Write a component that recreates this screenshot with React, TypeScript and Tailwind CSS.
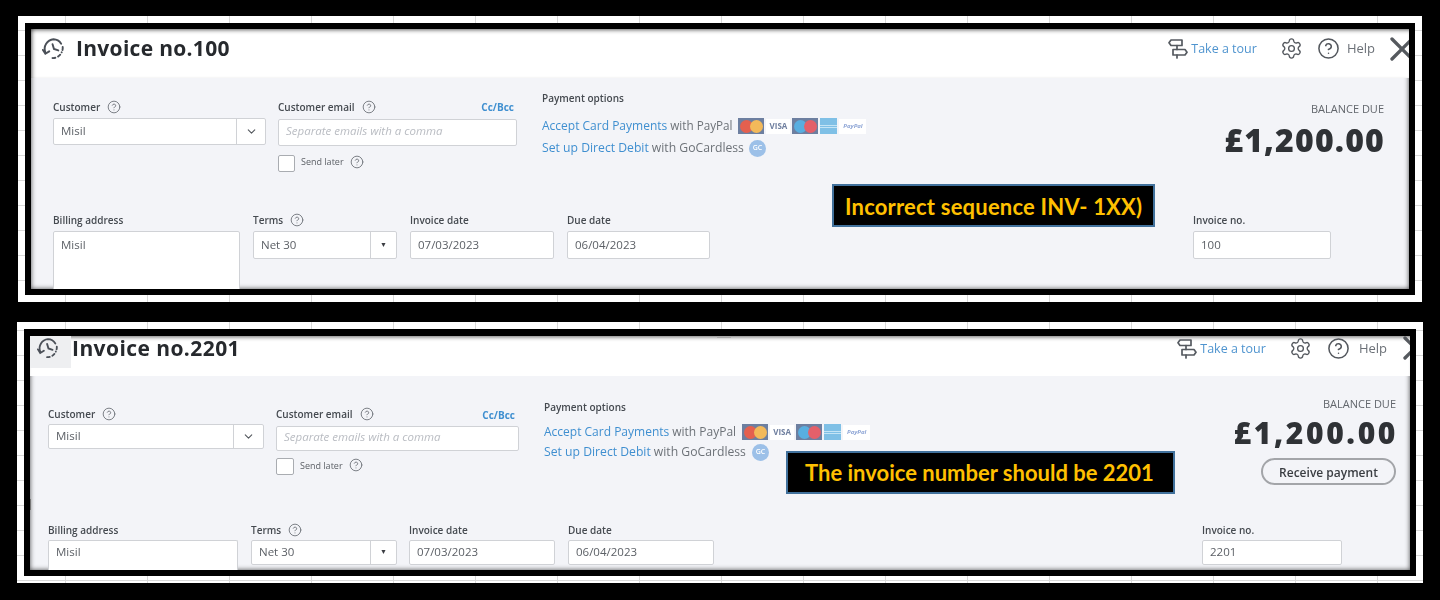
import React from 'react';
import { ChevronDown, CircleHelp, Settings, X } from 'lucide-react';

const sheetGrid =
  'bg-white bg-[linear-gradient(to_right,#d9d9d9_1px,transparent_1px),linear-gradient(to_bottom,#d9d9d9_1px,transparent_1px)] bg-[size:82px_25px]';

const HistoryIcon = ({ size }: { size: number }) => (
  <svg width={size} height={size} viewBox="0 0 24 24" fill="none" stroke="#4b5058" strokeWidth="2" strokeLinecap="round">
    <path d="M3.5 16 A10 10 0 0 1 12 2.4 A10 10 0 0 1 20 7" />
    <path d="M21.6 10.5 A10 10 0 0 1 20.5 16" strokeDasharray="3 2.5" />
    <path d="M19 18.5 A10 10 0 0 1 11 22" strokeDasharray="3 3" />
    <path d="M1 13.5 L3.5 17.5 L7.5 15" />
    <path d="M11 7.5 L12.5 12.5 L17 14" />
  </svg>
);

const TourIcon = () => (
  <svg width="20" height="21" viewBox="0 0 20 21" fill="none" stroke="#555a60" strokeWidth="1.7" strokeLinejoin="round" strokeLinecap="round">
    <path d="M3 2 H14 V7.5 H3 L1 4.75 Z" />
    <path d="M5 11.5 H17 L19 14.2 L17 17 H5 Z" />
    <path d="M9 7.5 V11.5 M9 17 V20" />
  </svg>
);

const CardBadges = () => (
  <div className="flex items-center gap-[2px]">
    <div className="w-[26px] h-[16px] bg-[#6d7fa0] flex items-center justify-center">
      <span className="w-[13px] h-[13px] rounded-full bg-[#e4604f]" />
      <span className="w-[13px] h-[13px] rounded-full bg-[#f3b95a] -ml-[3px]" />
    </div>
    <div className="w-[24px] h-[15px] bg-white flex items-center justify-center text-[8px] font-bold text-[#6f7f9f]">VISA</div>
    <div className="w-[26px] h-[16px] bg-[#6d7fa0] flex items-center justify-center">
      <span className="w-[13px] h-[13px] rounded-full bg-[#58aee0]" />
      <span className="w-[13px] h-[13px] rounded-full bg-[#e4606a] -ml-[3px]" />
    </div>
    <div className="w-[17px] h-[16px] bg-[#7fc0e6] flex flex-col justify-center gap-px">
      <span className="h-px bg-[#c4e4f5]" />
      <span className="h-px bg-[#c4e4f5]" />
    </div>
    <div className="w-[27px] h-[15px] bg-white flex items-center justify-center text-[6px] font-bold italic text-[#8fa6d6]">PayPal</div>
  </div>
);

const Label = ({ text, help, className = '' }: { text: string; help?: boolean; className?: string }) => (
  <div className={`flex items-center gap-[7px] h-[14px] text-[10px] font-semibold text-[#454a50] ${className}`}>
    {text}
    {help && <CircleHelp size={14} strokeWidth={1.5} className="text-[#6b7077]" />}
  </div>
);

const Box = ({ value, className = '', placeholder }: { value?: string; className?: string; placeholder?: string }) => (
  <div className={`flex items-center pl-[7px] bg-white border border-[#d0d2d6] rounded-[2px] text-[11.5px] text-[#5c6066] ${className}`}>
    {placeholder ? <span className="italic text-[#b9bcc2]">{placeholder}</span> : value}
  </div>
);

const Callout = ({ text, className }: { text: string; className: string }) => (
  <div className={`absolute h-[43px] flex items-center bg-black border-2 border-[#41719c] text-[22px] font-bold text-[#ffc000] font-['Lato',sans-serif] ${className}`}>
    {text}
  </div>
);

const TopActions = ({ className, helpGap, textGap }: { className: string; helpGap: string; textGap: string }) => (
  <div className={`flex items-center ${className}`}>
    <TourIcon />
    <span className="ml-[3px] pt-[1px] text-[12.5px] text-[#4f94cf]">Take a tour</span>
    <Settings size={23} strokeWidth={1.4} className="ml-[23px] text-[#53575d]" />
    <CircleHelp size={23} strokeWidth={1.6} className={`${helpGap} text-[#53575d]`} />
    <span className={`${textGap} text-[13px] text-[#6b7077]`}>Help</span>
  </div>
);

const PaymentOptions = ({
  className,
  firstGap,
  secondGap,
  withSize,
  cardGap,
  gcGap,
}: {
  className: string;
  firstGap: string;
  secondGap: string;
  withSize: string;
  cardGap: string;
  gcGap: string;
}) => (
  <div className={className}>
    <div className="h-[12px] leading-[12px] text-[10px] font-semibold text-[#454a50]">Payment options</div>
    <div className={`${firstGap} flex items-center h-[16px] text-[12px] text-[#6d7278]`}>
      <span className="text-[#3f8fd0]">Accept Card Payments</span>
      <span className={`ml-[3px] ${withSize}`}>with PayPal</span>
      <div className={cardGap}><CardBadges /></div>
    </div>
    <div className={`${secondGap} flex items-center h-[17px] text-[12.2px] text-[#6d7278]`}>
      <span className="text-[#3f8fd0]">Set up Direct Debit</span>
      <span className="ml-[3px]">with GoCardless</span>
      <span className={`${gcGap} w-[17px] h-[17px] rounded-full bg-[#9cc0e8] flex items-center justify-center text-[7px] font-semibold text-white`}>GC</span>
    </div>
  </div>
);

const App = () => {
  return (
    <div className="h-[600px] bg-black overflow-hidden font-['Open_Sans',sans-serif]">
      {/* top screenshot */}
      <div className={`mt-[16px] ml-[18px] w-[1404px] h-[286px] p-[7px] bg-[position:47px_14px] ${sheetGrid}`}>
        <div className="h-full bg-black p-[6px]">
          <div className="relative h-full flex flex-col overflow-hidden bg-[#f3f4f8] shadow-[inset_0_0_5px_rgba(0,0,0,0.7)]">
            <div className="h-[49px] shrink-0 pb-[10px] flex items-center bg-white blur-[0.3px] shadow-[inset_0_4px_4px_-3px_rgba(0,0,0,0.6),inset_4px_0_4px_-3px_rgba(0,0,0,0.6)]">
              <div className="ml-[11px]"><HistoryIcon size={23} /></div>
              <h1 className="ml-[11px] text-[21px] font-bold tracking-[0.3px] text-[#26292d]">Invoice no.100</h1>
              <TopActions helpGap="ml-[14px]" textGap="ml-[7px]" className="ml-auto" />
              <X size={40} strokeWidth={2} className="ml-[7px] -mr-[13px] shrink-0 text-[#55595e]" />
            </div>

            <div className="h-[135px] shrink-0 flex pl-[22px] blur-[0.3px]">
              <div className="w-[213px] pt-[22px]">
                <Label text="Customer" help />
                <div className="mt-[4px] h-[27px] flex bg-white border border-[#d0d2d6] rounded-[2px] text-[11.5px] text-[#5c6066]">
                  <div className="flex-1 flex items-center pl-[7px] pb-[1px]">Misil</div>
                  <div className="w-[29px] border-l border-[#d0d2d6] flex items-center justify-center">
                    <ChevronDown size={13} className="text-[#53575d]" />
                  </div>
                </div>
              </div>
              <div className="ml-[12px] w-[239px] pt-[22px]">
                <div className="flex justify-between">
                  <Label text="Customer email" help />
                  <span className="text-[10px] font-bold text-[#3f8fd0] mr-[3px]">Cc/Bcc</span>
                </div>
                <Box placeholder="Separate emails with a comma" className="mt-[4px] h-[27px] pb-[3px]" />
                <div className="mt-[9px] flex items-start text-[9px] leading-[14px] text-[#5c6066]">
                  <div className="w-[17px] h-[17px] bg-white border border-[#a9acb1] rounded-[2px]" />
                  <span className="ml-[6px]">Send later</span>
                  <CircleHelp size={14} strokeWidth={1.5} className="ml-[6px] text-[#6b7077]" />
                </div>
              </div>
              <PaymentOptions firstGap="mt-[14px]" secondGap="mt-[6px]" withSize="text-[11.7px]" cardGap="ml-[6px]" gcGap="ml-[5px]" className="ml-[25px] pt-[14px]" />
              <div className="ml-auto mr-[25px] pt-[23px] flex flex-col items-end">
                <div className="h-[14px] text-[11px] text-[#62666c]">BALANCE DUE</div>
                <div className="mt-[5px] -mr-[1px] text-[32px] leading-[40px] tracking-[1.15px] font-extrabold text-[#2f3236]">£1,200.00</div>
              </div>
            </div>

            <div className="flex pl-[22px] blur-[0.3px]">
              <div className="w-[187px]">
                <Label text="Billing address" />
                <div className="mt-[4px] h-[70px] pt-[4px] pl-[7px] bg-white border border-[#d0d2d6] rounded-[2px] text-[11.5px] text-[#5c6066]">Misil</div>
              </div>
              <div className="ml-[13px] w-[144px]">
                <Label text="Terms" help />
                <div className="mt-[4px] h-[28px] flex bg-white border border-[#d0d2d6] rounded-[2px] text-[11.5px] text-[#5c6066]">
                  <div className="flex-1 flex items-center pl-[7px]">Net 30</div>
                  <div className="w-[26px] border-l border-[#d0d2d6] flex items-center justify-center text-[7px] text-[#3a3d42]">▼</div>
                </div>
              </div>
              <div className="ml-[13px] w-[144px]">
                <Label text="Invoice date" />
                <Box value="07/03/2023" className="mt-[4px] h-[28px]" />
              </div>
              <div className="ml-[13px] w-[143px]">
                <Label text="Due date" />
                <Box value="06/04/2023" className="mt-[4px] h-[28px]" />
              </div>
              <div className="ml-[483px] w-[138px]">
                <Label text="Invoice no." />
                <Box value="100" className="mt-[4px] h-[28px]" />
              </div>
            </div>

            <Callout text="Incorrect sequence INV- 1XX)" className="left-[801px] top-[155px] w-[323px] pl-[11px] pt-[2px] tracking-[0.2px]" />
          </div>
        </div>
      </div>

      {/* bottom screenshot */}
      <div className={`mt-[20px] ml-[17px] w-[1406px] h-[261px] p-[7px] bg-[position:48px_8px] ${sheetGrid}`}>
        <div className="h-full bg-black px-[6px] pt-[7px] pb-[6px]">
          <div className="relative h-full flex flex-col bg-[#f3f4f8] shadow-[inset_0_0_5px_rgba(0,0,0,0.7)]">
            <div className="h-[40px] shrink-0 flex items-start bg-white blur-[0.4px] shadow-[inset_0_4px_4px_-3px_rgba(0,0,0,0.6)]">
              <div className="w-[41px] h-[32px] bg-[#eeeff1] pl-[7px] pt-[1px]"><HistoryIcon size={22} /></div>
              <h1 className="ml-px text-[21px] leading-[25px] font-bold tracking-[0.43px] text-[#26292d]">Invoice no.2201</h1>
              <TopActions helpGap="ml-[15px]" textGap="ml-[9px]" className="ml-auto mt-[1px]" />
              <div className="ml-[8px] -mt-[8px] w-[15px] h-[40px] shrink-0 overflow-hidden">
                <X size={40} strokeWidth={2} className="max-w-none text-[#55595e]" />
              </div>
            </div>

            <div className="h-[147px] shrink-0 flex pl-[18px] blur-[0.4px]">
              <div className="w-[216px] pt-[31px]">
                <Label text="Customer" help />
                <div className="mt-[3px] h-[25px] flex bg-white border border-[#d0d2d6] rounded-[2px] text-[11.5px] text-[#5c6066]">
                  <div className="flex-1 flex items-center pl-[7px] pb-[1px]">Misil</div>
                  <div className="w-[30px] border-l border-[#d0d2d6] flex items-center justify-center">
                    <ChevronDown size={13} className="text-[#53575d]" />
                  </div>
                </div>
              </div>
              <div className="ml-[12px] w-[243px] pt-[31px]">
                <div className="flex justify-between">
                  <Label text="Customer email" help />
                  <span className="mt-px text-[10px] font-bold text-[#3f8fd0] mr-[4px]">Cc/Bcc</span>
                </div>
                <Box placeholder="Separate emails with a comma" className="mt-[3px] h-[25px] pb-[4px]" />
                <div className="mt-[7px] flex items-start text-[9px] leading-[15px] text-[#5c6066]">
                  <div className="w-[18px] h-[17px] bg-white border border-[#a9acb1] rounded-[2px]" />
                  <span className="ml-[6px]">Send later</span>
                  <CircleHelp size={14} strokeWidth={1.5} className="ml-[6px] text-[#6b7077]" />
                </div>
              </div>
              <PaymentOptions firstGap="mt-[11px]" secondGap="mt-[4px]" withSize="text-[12px]" cardGap="ml-[6px]" gcGap="ml-[6px]" className="ml-[25px] pt-[25px]" />
              <div className="ml-auto mr-[14px] pt-[20px] flex flex-col items-end">
                <div className="h-[14px] text-[11px] text-[#62666c]">BALANCE DUE</div>
                <div className="mt-[5px] -mr-[2px] text-[30px] leading-[36px] tracking-[2.6px] font-extrabold text-[#2f3236]">£1,200.00</div>
                <div className="mt-[7px] w-[135px] h-[27px] pt-[2px] flex items-center justify-center rounded-full border-2 border-[#a3a5a9] text-[12px] font-semibold text-[#3a3d42]">Receive payment</div>
              </div>
            </div>

            <div className="flex pl-[18px] blur-[0.4px]">
              <div className="w-[190px]">
                <Label text="Billing address" />
                <div className="mt-[3px] h-[30px] pt-[2px] pl-[7px] bg-white border border-b-0 border-[#d0d2d6] rounded-t-[2px] text-[11.5px] text-[#5c6066]">Misil</div>
              </div>
              <div className="ml-[13px] w-[146px]">
                <Label text="Terms" help />
                <div className="mt-[3px] h-[25px] flex bg-white border border-[#d0d2d6] rounded-[2px] text-[11.5px] text-[#5c6066]">
                  <div className="flex-1 flex items-center pl-[7px] pb-[1px]">Net 30</div>
                  <div className="w-[26px] border-l border-[#d0d2d6] flex items-center justify-center text-[7px] text-[#3a3d42]">▼</div>
                </div>
              </div>
              <div className="ml-[12px] w-[146px]">
                <Label text="Invoice date" />
                <Box value="07/03/2023" className="mt-[3px] h-[25px] pb-[1px]" />
              </div>
              <div className="ml-[13px] w-[146px]">
                <Label text="Due date" />
                <Box value="06/04/2023" className="mt-[3px] h-[25px] pb-[1px]" />
              </div>
              <div className="ml-[488px] w-[140px]">
                <Label text="Invoice no." />
                <Box value="2201" className="mt-[3px] h-[25px] pb-[1px]" />
              </div>
            </div>

            {/* stray capture marks left in the pasted screenshot */}
            <div className="absolute left-[687px] top-0 w-[14px] h-[2px] bg-[#a8a8a8]" />
            <div className="absolute left-0 top-[163px] w-[1px] h-[11px] bg-[#777777]" />

            <Callout text="The invoice number should be 2201" className="left-[756px] top-[115px] w-[389px] pl-[17px]" />
          </div>
        </div>
      </div>
    </div>
  );
};

export default App;
